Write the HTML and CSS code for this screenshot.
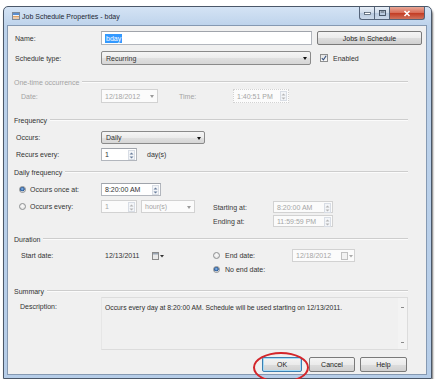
FILE: index.html
```html
<!DOCTYPE html>
<html lang="en">
<head>
    <meta charset="UTF-8">
    <title>Job Schedule Properties - bday</title>
    <link rel="stylesheet" href="styles.css">
</head>
<body>
    <div class="window">
        <div class="titlebar">
            <svg class="appicon" width="8" height="8" viewBox="0 0 8 8">
                <rect x="0.5" y="0.5" width="7" height="7" fill="#f4f4f4" stroke="#7d8a99"/>
                <rect x="1" y="1" width="6" height="2" fill="#5b8fd0"/>
                <path d="M1 4.5h6M1 6h6" stroke="#d98a3c" stroke-width="0.8"/>
            </svg>
            <span class="title">Job Schedule Properties - bday</span>
            <div class="caption">
                <span class="cbtn min"><svg width="7" height="3" viewBox="0 0 7 3"><rect x="0.5" y="0.5" width="6" height="2" fill="#fff" stroke="#3d4a5c" stroke-width="0.7"/></svg></span>
                <span class="cbtn max"><svg width="7" height="6" viewBox="0 0 7 6"><rect x="0.5" y="0.5" width="6" height="5" fill="none" stroke="#3d4a5c" stroke-width="0.9"/><rect x="1.5" y="1.5" width="4" height="1" fill="#3d4a5c"/></svg></span>
                <span class="cbtn close"><svg width="8" height="7" viewBox="0 0 8 7"><path d="M1.5 1L6.5 6M6.5 1L1.5 6" stroke="#fff" stroke-width="1.6"/></svg></span>
            </div>
        </div>

        <div class="client">
            <div class="row r-name">
                <span class="lbl">Name:</span>
                <span class="input name-input"><span class="selected">bday</span></span>
                <span class="btn jobs-btn">Jobs in Schedule</span>
            </div>
            <div class="row r-type">
                <span class="lbl">Schedule type:</span>
                <span class="combo type-combo">Recurring<i class="arrow"></i></span>
                <span class="check"><svg width="6" height="6" viewBox="0 0 6 6"><path d="M0.8 3.2L2.4 4.8L5.2 0.8" fill="none" stroke="#35507d" stroke-width="1.1"/></svg></span>
                <span class="check-lbl">Enabled</span>
            </div>

            <div class="section">
                <div class="head disabled">One-time occurrence</div>
                <div class="row r-date">
                    <span class="lbl in disabled">Date:</span>
                    <span class="input date-box dis">12/18/2012<i class="arrow grey"></i></span>
                    <span class="lbl2 disabled">Time:</span>
                    <span class="input time-box dis">1:40:51 PM<span class="spin"><svg width="5" height="9" viewBox="0 0 5 9"><path d="M0.5 3.5L2.5 1.5L4.5 3.5ZM0.5 5.5L2.5 7.5L4.5 5.5Z" fill="#b5b5b5"/></svg></span></span>
                </div>
            </div>

            <div class="section s-freq">
                <div class="head">Frequency</div>
                <div class="row r-occurs">
                    <span class="lbl in1">Occurs:</span>
                    <span class="combo occurs-combo">Daily<i class="arrow"></i></span>
                </div>
                <div class="row r-recurs">
                    <span class="lbl in1">Recurs every:</span>
                    <span class="input num-box">1<span class="spin"><svg width="5" height="9" viewBox="0 0 5 9"><path d="M0.5 3.5L2.5 1.5L4.5 3.5ZM0.5 5.5L2.5 7.5L4.5 5.5Z" fill="#6b7f9c"/></svg></span></span>
                    <span class="unit">day(s)</span>
                </div>
            </div>

            <div class="section s-daily">
                <div class="head">Daily frequency</div>
                <div class="row r-once">
                    <span class="lbl rlbl"><span class="radio on"></span>Occurs once at:</span>
                    <span class="input once-box">8:20:00 AM<span class="spin"><svg width="5" height="9" viewBox="0 0 5 9"><path d="M0.5 3.5L2.5 1.5L4.5 3.5ZM0.5 5.5L2.5 7.5L4.5 5.5Z" fill="#6b7f9c"/></svg></span></span>
                </div>
                <div class="every-block">
                    <div class="row r-every">
                        <span class="lbl rlbl"><span class="radio"></span>Occurs every:</span>
                        <span class="input num-box dis">1<span class="spin"><svg width="5" height="9" viewBox="0 0 5 9"><path d="M0.5 3.5L2.5 1.5L4.5 3.5ZM0.5 5.5L2.5 7.5L4.5 5.5Z" fill="#b5b5b5"/></svg></span></span>
                        <span class="input hour-box dis">hour(s)<i class="arrow grey"></i></span>
                    </div>
                    <div class="range">
                        <div class="row r-start">
                            <span class="lbl3">Starting at:</span>
                            <span class="input range-box dis">8:20:00 AM<span class="spin"><svg width="5" height="9" viewBox="0 0 5 9"><path d="M0.5 3.5L2.5 1.5L4.5 3.5ZM0.5 5.5L2.5 7.5L4.5 5.5Z" fill="#b5b5b5"/></svg></span></span>
                        </div>
                        <div class="row r-end">
                            <span class="lbl3">Ending at:</span>
                            <span class="input range-box dis">11:59:59 PM<span class="spin"><svg width="5" height="9" viewBox="0 0 5 9"><path d="M0.5 3.5L2.5 1.5L4.5 3.5ZM0.5 5.5L2.5 7.5L4.5 5.5Z" fill="#b5b5b5"/></svg></span></span>
                        </div>
                    </div>
                </div>
            </div>

            <div class="section s-duration">
                <div class="head">Duration</div>
                <div class="row r-startdate">
                    <span class="lbl in">Start date:</span>
                    <span class="input sdate-box">12/13/2011<span class="cal"><svg width="12" height="8" viewBox="0 0 12 8"><rect x="0.5" y="0.5" width="6" height="7" fill="#e9e9e9" stroke="#8a8a8a"/><rect x="1" y="1" width="5" height="1.5" fill="#9aa5b3"/><path d="M8 3h4l-2 2.5z" fill="#333"/></svg></span></span>
                    <span class="radio end-radio"></span>
                    <span class="end-lbl">End date:</span>
                    <span class="input edate-box dis">12/18/2012<span class="cal"><svg width="12" height="8" viewBox="0 0 12 8"><rect x="0.5" y="0.5" width="6" height="7" fill="#f2f2f2" stroke="#c0c0c0"/><path d="M8 3h4l-2 2.5z" fill="#aaa"/></svg></span></span>
                </div>
                <div class="row r-noend">
                    <span class="radio on end-radio2"></span>
                    <span class="end-lbl">No end date:</span>
                </div>
            </div>

            <div class="section s-summary">
                <div class="head">Summary</div>
                <div class="row r-desc">
                    <span class="lbl desc-lbl">Description:</span>
                    <div class="memo">
                        <span class="memo-text">Occurs every day at 8:20:00 AM. Schedule will be used starting on 12/13/2011.</span>
                        <span class="vscroll"><i class="up"></i><i class="down"></i></span>
                    </div>
                </div>
            </div>

            <div class="buttons">
                <span class="btn ok-btn">OK<span class="ring"></span></span>
                <span class="btn cancel-btn">Cancel</span>
                <span class="btn help-btn">Help</span>
            </div>
        </div>
    </div>
</body>
</html>
```

FILE: styles.css
```css
body {
    margin: 0;
    background: #fff;
    font-family: "Liberation Sans", Arial, sans-serif;
    font-size: 7px;
    color: #333;
}

.window {
    box-sizing: border-box;
    width: 429px;
    height: 373px;
    margin: 6px 0 0 3px;
    padding: 0 4px 3px 3px;
    border: 1px solid #4b5869;
    border-radius: 5px 5px 0 0;
    background: linear-gradient(#d4e3f4, #bcd2eb 20px, #b6cde8);
    box-shadow: 1px 3px 2px rgba(0, 0, 0, 0.55);
    display: flex;
    flex-direction: column;
}

.titlebar {
    height: 18px;
    display: flex;
    align-items: center;
    padding-left: 5px;
}

.appicon {
    margin-right: 2px;
}

.title {
    color: #1c2633;
    font-size: 7px;
}

.caption {
    margin-left: auto;
    margin-right: 2px;
    align-self: flex-start;
    display: flex;
}

.cbtn {
    height: 12px;
    display: flex;
    align-items: center;
    justify-content: center;
    border: 1px solid #55647a;
    border-top: none;
}

.min {
    width: 14px;
    border-right: none;
    border-radius: 0 0 0 3px;
    background: linear-gradient(#e7eef7, #cfdbea 50%, #b7c8de 51%, #cbd9ea);
}

.max {
    width: 14px;
    border-right: none;
    background: linear-gradient(#e7eef7, #cfdbea 50%, #b7c8de 51%, #cbd9ea);
}

.close {
    width: 34px;
    border-radius: 0 0 3px 0;
    background: linear-gradient(#e9a897, #d86a55 50%, #c23a22 51%, #d0725c);
}

.client {
    box-sizing: border-box;
    height: 350px;
    border: 1px solid #8599b2;
    background: #f0f0f0;
    padding: 5px 4px 0 7px;
}

.row {
    display: flex;
    align-items: center;
    height: 14px;
}

.lbl {
    width: 86px;
    flex-shrink: 0;
    box-sizing: border-box;
    display: flex;
    align-items: center;
}

.lbl.in {
    padding-left: 6px;
}

.lbl.in1 {
    padding-left: 1px;
}

.disabled {
    color: #a3a3a3;
}

.input {
    box-sizing: border-box;
    height: 14px;
    display: flex;
    align-items: center;
    padding-left: 3px;
    background: #fff;
    border: 1px solid #b2b6bd;
    border-top-color: #a0a4ab;
    position: relative;
}

.input.dis {
    color: #a5a5a5;
    border-color: #d2d2d2;
    background: #fbfbfb;
}

.name-input {
    width: 211px;
}

.selected {
    background: #3399ff;
    color: #fff;
    padding: 1px 1px;
}

.btn {
    box-sizing: border-box;
    height: 14px;
    display: flex;
    align-items: center;
    justify-content: center;
    border: 1px solid #7a7a7a;
    border-radius: 2px;
    background: linear-gradient(#f4f4f4, #ebebeb 50%, #dddddd 51%, #d0d0d0);
    color: #222;
    position: relative;
}

.jobs-btn {
    width: 105px;
    margin-left: 5px;
}

.r-type {
    margin-top: 6px;
}

.combo {
    box-sizing: border-box;
    height: 14px;
    display: flex;
    align-items: center;
    padding-left: 4px;
    border: 1px solid #8a8a8a;
    border-radius: 2px;
    background: linear-gradient(#f5f5f5, #ececec 50%, #e0e0e0 51%, #d6d6d6);
    position: relative;
}

.type-combo {
    width: 210px;
}

.arrow {
    position: absolute;
    right: 3px;
    top: 5px;
    border-left: 2.5px solid transparent;
    border-right: 2.5px solid transparent;
    border-top: 3px solid #111;
}

.arrow.grey {
    border-top-color: #9a9a9a;
}

.check {
    box-sizing: border-box;
    width: 8px;
    height: 8px;
    margin-left: 9px;
    border: 1px solid #8e8f8f;
    background: linear-gradient(#e4e4e4, #f9f9f9);
    display: flex;
    align-items: center;
    justify-content: center;
}

.check-lbl {
    margin-left: 5px;
}

.section {
    margin-right: 14px;
}

.head {
    height: 10px;
    display: flex;
    align-items: center;
    margin-left: -1px;
    margin-top: 12px;
}

.head::after {
    content: "";
    flex: 1;
    margin-left: 3px;
    border-top: 1px solid #cdcdcd;
    border-bottom: 1px solid #fbfbfb;
}

.r-date {
    margin-top: 2px;
}

.date-box {
    width: 57px;
}

.lbl2 {
    width: 54px;
    margin-left: 21px;
}

.time-box {
    width: 56px;
    border-style: dotted;
}

.spin {
    position: absolute;
    right: 1px;
    top: 1px;
    width: 7px;
    height: 10px;
    box-sizing: border-box;
    border: 1px solid #d8dde5;
    background: #f3f5f8;
    display: flex;
    align-items: center;
    justify-content: center;
}

.r-occurs {
    margin-top: 6px;
    height: 13px;
}

.occurs-combo {
    width: 104px;
    height: 13px;
}

.r-recurs {
    margin-top: 4px;
    height: 13px;
}

.num-box {
    width: 36px;
    height: 13px;
}

.unit {
    margin-left: 10px;
}

.s-daily .head {
    margin-top: 6px;
}

.r-once {
    margin-top: 6px;
    height: 13px;
}

.rlbl {
    padding-left: 4px;
}

.radio {
    box-sizing: border-box;
    width: 7px;
    height: 7px;
    border-radius: 50%;
    border: 1px solid #8d8f91;
    background: radial-gradient(circle at 50% 40%, #fbfbfb, #dcdcdc);
    margin-right: 4px;
    flex-shrink: 0;
}

.radio.on {
    background: radial-gradient(circle at 45% 40%, #9cc4ee 0, #3a6fb0 1.6px, #1f4e8c 2.2px, #e8e8e8 2.6px);
}

.once-box {
    width: 60px;
    height: 13px;
}

.every-block {
    display: flex;
    margin-top: 4px;
}

.r-every {
    width: 198px;
    height: 13px;
    flex-shrink: 0;
    align-self: flex-start;
}

.hour-box {
    width: 54px;
    height: 13px;
    margin-left: 4px;
}

.r-start {
    margin-top: 1px;
    height: 12px;
}

.r-end {
    margin-top: 2px;
    height: 12px;
}

.lbl3 {
    width: 60px;
    color: #3a3a3a;
}

.range-box {
    width: 60px;
    height: 12px;
}

.s-duration .head {
    margin-top: 7px;
}

.r-startdate {
    margin-top: 5px;
    height: 13px;
}

.sdate-box {
    width: 65px;
    height: 13px;
    border-color: #f0f0f0;
    background: transparent;
}

.cal {
    position: absolute;
    right: 1px;
    top: 2px;
    display: flex;
}

.end-radio {
    margin-left: 47px;
    margin-right: 5px;
}

.end-lbl {
    width: 67px;
}

.edate-box {
    width: 63px;
    height: 13px;
}

.r-noend {
    margin-top: 1px;
    height: 12px;
}

.end-radio2 {
    margin-left: 198px;
    margin-right: 5px;
}

.s-summary .head {
    margin-top: 11px;
}

.r-desc {
    margin-top: 1px;
    height: 53px;
    align-items: flex-start;
}

.desc-lbl {
    padding-left: 5px;
    padding-top: 6px;
}

.memo {
    box-sizing: border-box;
    width: 307px;
    height: 53px;
    border: 1px solid #dcdcdc;
    border-left-color: #e6e6e6;
    display: flex;
    justify-content: space-between;
    padding: 6px 0 0 3px;
    position: relative;
}

.memo-text {
    color: #2e2e2e;
    font-size: 6.8px;
}

.vscroll {
    position: absolute;
    right: 0;
    top: 0;
    bottom: 0;
    width: 9px;
    background: #f3f3f3;
}

.vscroll i {
    position: absolute;
    left: 3px;
    width: 3px;
    height: 1px;
    background: #8a8a8a;
}

.vscroll .up {
    top: 9px;
}

.vscroll .down {
    bottom: 6px;
}

.buttons {
    display: flex;
    margin-top: 7px;
    margin-left: 247px;
}

.buttons .btn {
    height: 15px;
}

.ok-btn {
    width: 40px;
    border-color: #3c7fb1;
    box-shadow: inset 0 0 0 1px #a9dcf5;
}

.cancel-btn {
    width: 46px;
    margin-left: 7px;
}

.help-btn {
    width: 47px;
    margin-left: 5px;
}

.ring {
    position: absolute;
    left: -10px;
    top: -6px;
    width: 52px;
    height: 27px;
    border: 2.5px solid #d3262b;
    border-radius: 50%;
}
```
